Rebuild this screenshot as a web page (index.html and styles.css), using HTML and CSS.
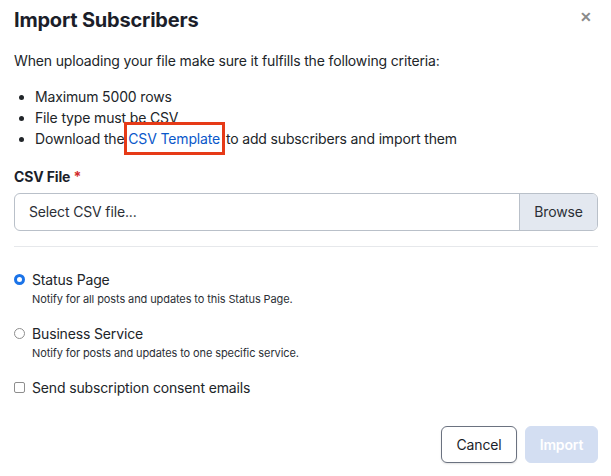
FILE: index.html
```html
<!DOCTYPE html>
<html>
<head>
<meta charset="utf-8">
<link rel="stylesheet" href="styles.css">
</head>
<body>
<div class="modal">
  <div class="header">
    <h1 class="title">Import Subscribers</h1>
    <span class="close">&#x2715;</span>
  </div>
  <p class="intro">When uploading your file make sure it fulfills the following criteria:</p>
  <ul class="criteria">
    <li>Maximum 5000 rows</li>
    <li>File type must be CSV</li>
    <li>Download the <span class="hl"><a class="link" href="#">CSV Template</a></span> to add subscribers and import them</li>
  </ul>
  <div class="field-label">CSV File <span class="req">*</span></div>
  <div class="file-input">
    <span class="placeholder">Select CSV file...</span>
    <span class="browse">Browse</span>
  </div>
  <hr class="divider">
  <div class="option">
    <div class="opt-row"><span class="radio checked"></span><span class="opt-label">Status Page</span></div>
    <div class="opt-desc">Notify for all posts and updates to this Status Page.</div>
  </div>
  <div class="option">
    <div class="opt-row"><span class="radio"></span><span class="opt-label">Business Service</span></div>
    <div class="opt-desc">Notify for posts and updates to one specific service.</div>
  </div>
  <div class="opt-row check-row"><span class="checkbox"></span><span class="opt-label">Send subscription consent emails</span></div>
  <div class="footer">
    <button class="btn cancel">Cancel</button>
    <button class="btn import">Import</button>
  </div>
</div>
</body>
</html>
```
FILE: styles.css
```css
html, body {
  margin: 0;
  background: #ffffff;
}
body {
  font-family: Inter, "Liberation Sans", sans-serif;
  color: #1f2329;
  width: 611px;
  height: 476px;
  overflow: hidden;
  letter-spacing: -0.15px;
}
.modal {
  padding: 0 13px 0 14px;
}
.header {
  display: flex;
  justify-content: space-between;
  align-items: flex-start;
  height: 40px;
}
.title {
  margin: 0;
  padding-top: 7px;
  font-size: 20px;
  font-weight: 700;
  line-height: 26px;
  color: #1b1e2a;
  letter-spacing: -0.2px;
}
.close {
  padding-top: 8px;
  padding-right: 6px;
  font-size: 14px;
  font-weight: 700;
  color: #8a8a8a;
}
.intro {
  margin: 11px 0 0;
  font-size: 14px;
  line-height: 20px;
  color: #212529;
}
.criteria {
  margin: 15px 0 0;
  padding-left: 21px;
  font-size: 14px;
  line-height: 21px;
  color: #212529;
}
.hl {
  display: inline-block;
  border: 3px solid #e63a17;
  padding: 3px 2px 3px 1px;
  margin: -6px -3px -6px -4px;
  line-height: 21px;
}
.link {
  color: #0a58ca;
  text-decoration: none;
}
.field-label {
  margin-top: 18px;
  font-size: 14px;
  font-weight: 700;
  line-height: 20px;
  color: #1b1e2a;
}
.req {
  color: #d12c2c;
}
.file-input {
  margin-top: 6px;
  display: flex;
  height: 38px;
  border: 1px solid #b9c0c9;
  border-radius: 6px;
  box-sizing: border-box;
  overflow: hidden;
  font-size: 14px;
}
.placeholder {
  flex: 1;
  padding-left: 14px;
  line-height: 36px;
  color: #2b2f36;
}
.browse {
  width: 77px;
  text-align: center;
  line-height: 36px;
  background: #e3e8f0;
  border-left: 1px solid #b9c0c9;
  color: #2b2f36;
}
.divider {
  margin: 15px 0 0;
  border: 0;
  border-top: 1px solid #e6e8eb;
}
.option {
  margin-top: 22px;
}
.option + .option {
  margin-top: 17px;
}
.opt-row {
  display: flex;
  align-items: center;
  height: 20px;
}
.radio {
  width: 11px;
  height: 11px;
  border-radius: 50%;
  border: 1px solid #8e8e8e;
  box-sizing: border-box;
  margin-right: 7px;
}
.radio.checked {
  border: 3px solid #1a73e8;
  background: #fff;
}
.checkbox {
  width: 11px;
  height: 11px;
  border: 1px solid #8e8e8e;
  border-radius: 2px;
  box-sizing: border-box;
  margin-right: 7px;
}
.opt-label {
  font-size: 14px;
  color: #212529;
}
.opt-desc {
  margin-top: 3px;
  padding-left: 18px;
  font-size: 11px;
  line-height: 14px;
  color: #2b2f36;
  letter-spacing: -0.1px;
}
.check-row {
  margin-top: 17px;
}
.footer {
  display: flex;
  justify-content: flex-end;
  gap: 8px;
  margin-top: 29px;
}
.btn {
  height: 37px;
  border-radius: 6px;
  font-family: Inter, "Liberation Sans", sans-serif;
  font-size: 14px;
  padding: 0;
  letter-spacing: -0.15px;
}
.cancel {
  width: 76px;
  background: #fff;
  border: 1px solid #6b7280;
  color: #1b1e2a;
  box-shadow: 0 1px 2px rgba(0,0,0,0.12);
}
.import {
  width: 73px;
  background: #d3def2;
  border: 1px solid #d3def2;
  color: #ffffff;
  font-weight: 600;
}
```
